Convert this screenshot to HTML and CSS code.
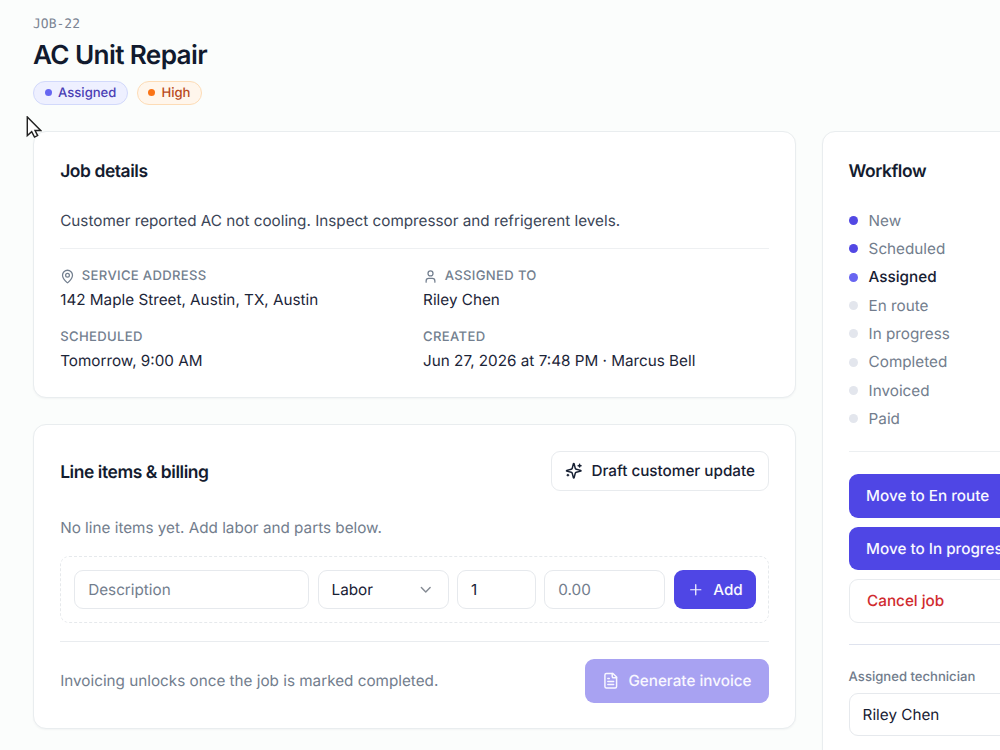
FILE: index.html
```html
<!DOCTYPE html>
<html lang="en">
<head>
<meta charset="utf-8">
<title>AC Unit Repair</title>
<link rel="stylesheet" href="styles.css">
</head>
<body>
<div class="page">
  <header class="head">
    <div class="job-id">JOB-22</div>
    <h1>AC Unit Repair</h1>
    <div class="badges">
      <span class="badge assigned"><i></i>Assigned</span>
      <span class="badge high"><i></i>High</span>
    </div>
  </header>
  <div class="columns">
    <main class="main">
      <section class="card details">
        <h2>Job details</h2>
        <p class="desc">Customer reported AC not cooling. Inspect compressor and refrigerent levels.</p>
        <dl class="facts">
          <div><dt><svg class="ico" viewBox="0 0 24 24"><path d="M20 10c0 4.993-5.539 10.193-7.399 11.799a1 1 0 0 1-1.202 0C9.539 20.193 4 14.993 4 10a8 8 0 0 1 16 0"/><circle cx="12" cy="10" r="3"/></svg>SERVICE ADDRESS</dt><dd>142 Maple Street, Austin, TX, Austin</dd></div>
          <div><dt><svg class="ico" viewBox="0 0 24 24"><circle cx="12" cy="7" r="4"/><path d="M19 21v-2a4 4 0 0 0-4-4H9a4 4 0 0 0-4 4v2"/></svg>ASSIGNED TO</dt><dd>Riley Chen</dd></div>
          <div><dt>SCHEDULED</dt><dd>Tomorrow, 9:00 AM</dd></div>
          <div><dt>CREATED</dt><dd>Jun 27, 2026 at 7:48 PM · Marcus Bell</dd></div>
        </dl>
      </section>
      <section class="card billing">
        <div class="bill-head">
          <h2>Line items &amp; billing</h2>
          <button class="btn draft"><svg class="ico" viewBox="0 0 24 24"><path d="M9.937 15.5A2 2 0 0 0 8.5 14.063l-6.135-1.582a.5.5 0 0 1 0-.962L8.5 9.936A2 2 0 0 0 9.937 8.5l1.582-6.135a.5.5 0 0 1 .963 0L14.063 8.5A2 2 0 0 0 15.5 9.937l6.135 1.581a.5.5 0 0 1 0 .964L15.5 14.063a2 2 0 0 0-1.437 1.437l-1.582 6.135a.5.5 0 0 1-.963 0z"/><path d="M20 3v4M22 5h-4M4 17v2M5 18H3"/></svg>Draft customer update</button>
        </div>
        <p class="muted empty">No line items yet. Add labor and parts below.</p>
        <div class="item-form">
          <div class="field placeholder">Description</div>
          <div class="field select">Labor<svg class="ico" viewBox="0 0 24 24"><path d="m6 9 6 6 6-6"/></svg></div>
          <div class="field">1</div>
          <div class="field placeholder">0.00</div>
          <button class="btn primary add"><svg class="ico" viewBox="0 0 24 24"><path d="M5 12h14M12 5v14"/></svg>Add</button>
        </div>
        <div class="bill-foot">
          <p class="muted">Invoicing unlocks once the job is marked completed.</p>
          <button class="btn primary generate" disabled><svg class="ico" viewBox="0 0 24 24"><path d="M15 2H6a2 2 0 0 0-2 2v16a2 2 0 0 0 2 2h12a2 2 0 0 0 2-2V7Z"/><path d="M14 2v4a2 2 0 0 0 2 2h4M10 9H8M16 13H8M16 17H8"/></svg>Generate invoice</button>
        </div>
      </section>
    </main>
    <aside class="card workflow">
      <h2>Workflow</h2>
      <ul class="steps">
        <li class="done">New</li>
        <li class="done">Scheduled</li>
        <li class="current">Assigned</li>
        <li>En route</li>
        <li>In progress</li>
        <li>Completed</li>
        <li>Invoiced</li>
        <li>Paid</li>
      </ul>
      <div class="actions">
        <button class="btn primary">Move to En route</button>
        <button class="btn primary">Move to In progress</button>
        <button class="btn cancel">Cancel job</button>
      </div>
      <div class="tech">
        <div class="tech-label">Assigned technician</div>
        <div class="field tech-select">Riley Chen</div>
      </div>
    </aside>
  </div>
</div>
<svg class="cursor" viewBox="0 0 16 24"><path d="M1 1v19.500l4.600-4.200 2.900 5.700 3.300-1.600-2.700-5.200H15z"/></svg>
</body>
</html>
```
FILE: styles.css
```css
* { box-sizing: border-box; margin: 0; padding: 0; }
html, body { height: 750px; overflow: hidden; }
body {
  position: relative;
  background: #fbfdfc;
  color: #172033;
  font-family: Inter, "Liberation Sans", sans-serif;
  font-size: 15.25px;
  line-height: 24px;
  text-rendering: geometricPrecision;
}
.page { width: 1130px; padding: 16px 0 0 33px; }
.head { height: 115px; }
.job-id { font: 13px/18px "DejaVu Sans Mono", monospace; color: #7b8594; }
h1 { font-size: 26.2px; line-height: 32px; font-weight: 600; letter-spacing: -0.65px; margin-top: 6px; color: #111a2e; }
.badges { display: flex; gap: 9px; margin-top: 8.700px; }
.badge {
  display: flex; align-items: center; gap: 6px; height: 24px; padding: 0 11px;
  border: 1px solid; border-radius: 12px; font-size: 13.1px; font-weight: 500;
}
.badge i { width: 7px; height: 7px; border-radius: 50%; }
.assigned { background: #eef0ff; border-color: #d2d9fb; color: #4a3eb5; }
.assigned i { background: #6666f1; }
.high { background: #fff6ec; border-color: #fddcb6; color: #b94a1c; padding: 0 11px 0 10px; }
.high i { background: #fa7315; }
.columns { display: flex; align-items: flex-start; gap: 25.600px; }
.main { width: 763px; display: flex; flex-direction: column; gap: 26px; }
.card {
  background: #fff; border: 1px solid #e9edef; border-radius: 13px;
  padding: 26px 26px 0; box-shadow: 0 1px 2px rgba(15, 23, 42, .04);
}
h2 { height: 26px; padding-top: 1px; font-size: 17.45px; line-height: 26px; font-weight: 600; letter-spacing: -0.43px; color: #141c2f; }
.ico { flex: none; fill: none; stroke: currentColor; stroke-width: 2; stroke-linecap: round; stroke-linejoin: round; }
.details { height: 267px; padding-left: 26.200px; }
.desc { margin-top: 24.500px; color: #3b4557; }
.facts { margin-top: 15.500px; padding-top: 19px; border-top: 1px solid #eef0f2; display: grid; grid-template-columns: 1fr 1fr; column-gap: 17px; row-gap: 17px; }
.facts dt { display: flex; align-items: center; gap: 6.600px; height: 17px; line-height: 17px; font-size: 13.1px; font-weight: 500; letter-spacing: .33px; color: #737f8f; }
.facts dt .ico { width: 15px; height: 15px; }
.facts dd { margin-top: 3px; color: #1c2538; }
.billing { height: 305px; padding-left: 26.200px; }
.bill-head { display: flex; align-items: center; justify-content: space-between; height: 40px; }
.bill-head h2 { padding-top: 1.500px; }
.btn {
  display: flex; align-items: center; height: 43.6px; border: 0; border-radius: 9px;
  font: 500 15.25px/24px Inter, "Liberation Sans", sans-serif; white-space: nowrap;
  text-rendering: geometricPrecision;
}
.primary { background: #4f46e5; color: #f8f8ff; }
.draft { height: 40px; padding: 0 13px; gap: 9px; background: #fff; border: 1px solid #e8ebee; color: #172033; }
.draft .ico { width: 17.500px; height: 17.500px; }
.muted { color: #727d8d; }
.empty { margin-top: 24.500px; }
.item-form {
  display: grid; grid-template-columns: 235px 131px 79px 121px 82px; gap: 8.400px;
  align-items: center; height: 67px; margin-top: 16.500px; padding: 0 13px;
  border: 1px dashed #e6e9ec; border-radius: 9px;
}
.field { display: flex; align-items: center; height: 39px; padding: 0 13px; background: #fff; border: 1px solid #e6e9ed; border-radius: 9px; color: #172033; }
.placeholder { color: #727d8d; }
.select { justify-content: space-between; }
.select .ico { width: 17.500px; height: 17.500px; color: #858b94; }
.add { height: 39px; padding: 0 13px; gap: 9px; }
.add .ico { width: 17.500px; height: 17.500px; stroke-width: 1.700; }
.bill-foot { display: flex; align-items: center; justify-content: space-between; margin-top: 17.500px; padding-top: 17.500px; border-top: 1px solid #e9ecef; }
.generate { padding: 0 17.500px; gap: 8.500px; background: #a8a2f2; color: #f8f7ff; }
.generate .ico { width: 17.500px; height: 17.500px; }
.workflow { width: 308px; height: 660px; }
.steps { list-style: none; margin-top: 22.400px; }
.steps li { display: flex; align-items: center; gap: 11px; height: 28.350px; color: #727d8d; }
.steps li::before { content: ""; width: 9px; height: 9px; border-radius: 50%; background: #e3e6ed; }
.steps .done::before { background: #5248e4; }
.steps .current { color: #172033; font-weight: 500; }
.steps .current::before { background: #6865f1; }
.actions { display: flex; flex-direction: column; gap: 8.900px; margin-top: 17.600px; padding: 22.500px 0 21.100px; border-top: 1px solid #eceff1; }
.actions .btn { padding: 0 17.500px; }
.actions .cancel { background: #fff; border: 1px solid #e8ebee; color: #d02b2f; }
.tech { padding-top: 21.900px; border-top: 1px solid #dfe3ee; }
.tech-label { font-size: 13.1px; line-height: 20px; font-weight: 500; color: #717c8c; }
.tech-select { height: 43.600px; margin-top: 6.100px; }
.cursor { position: absolute; left: 26px; top: 116px; width: 16px; height: 23px; fill: #fff; stroke: #222; stroke-width: 1.500; }
```
